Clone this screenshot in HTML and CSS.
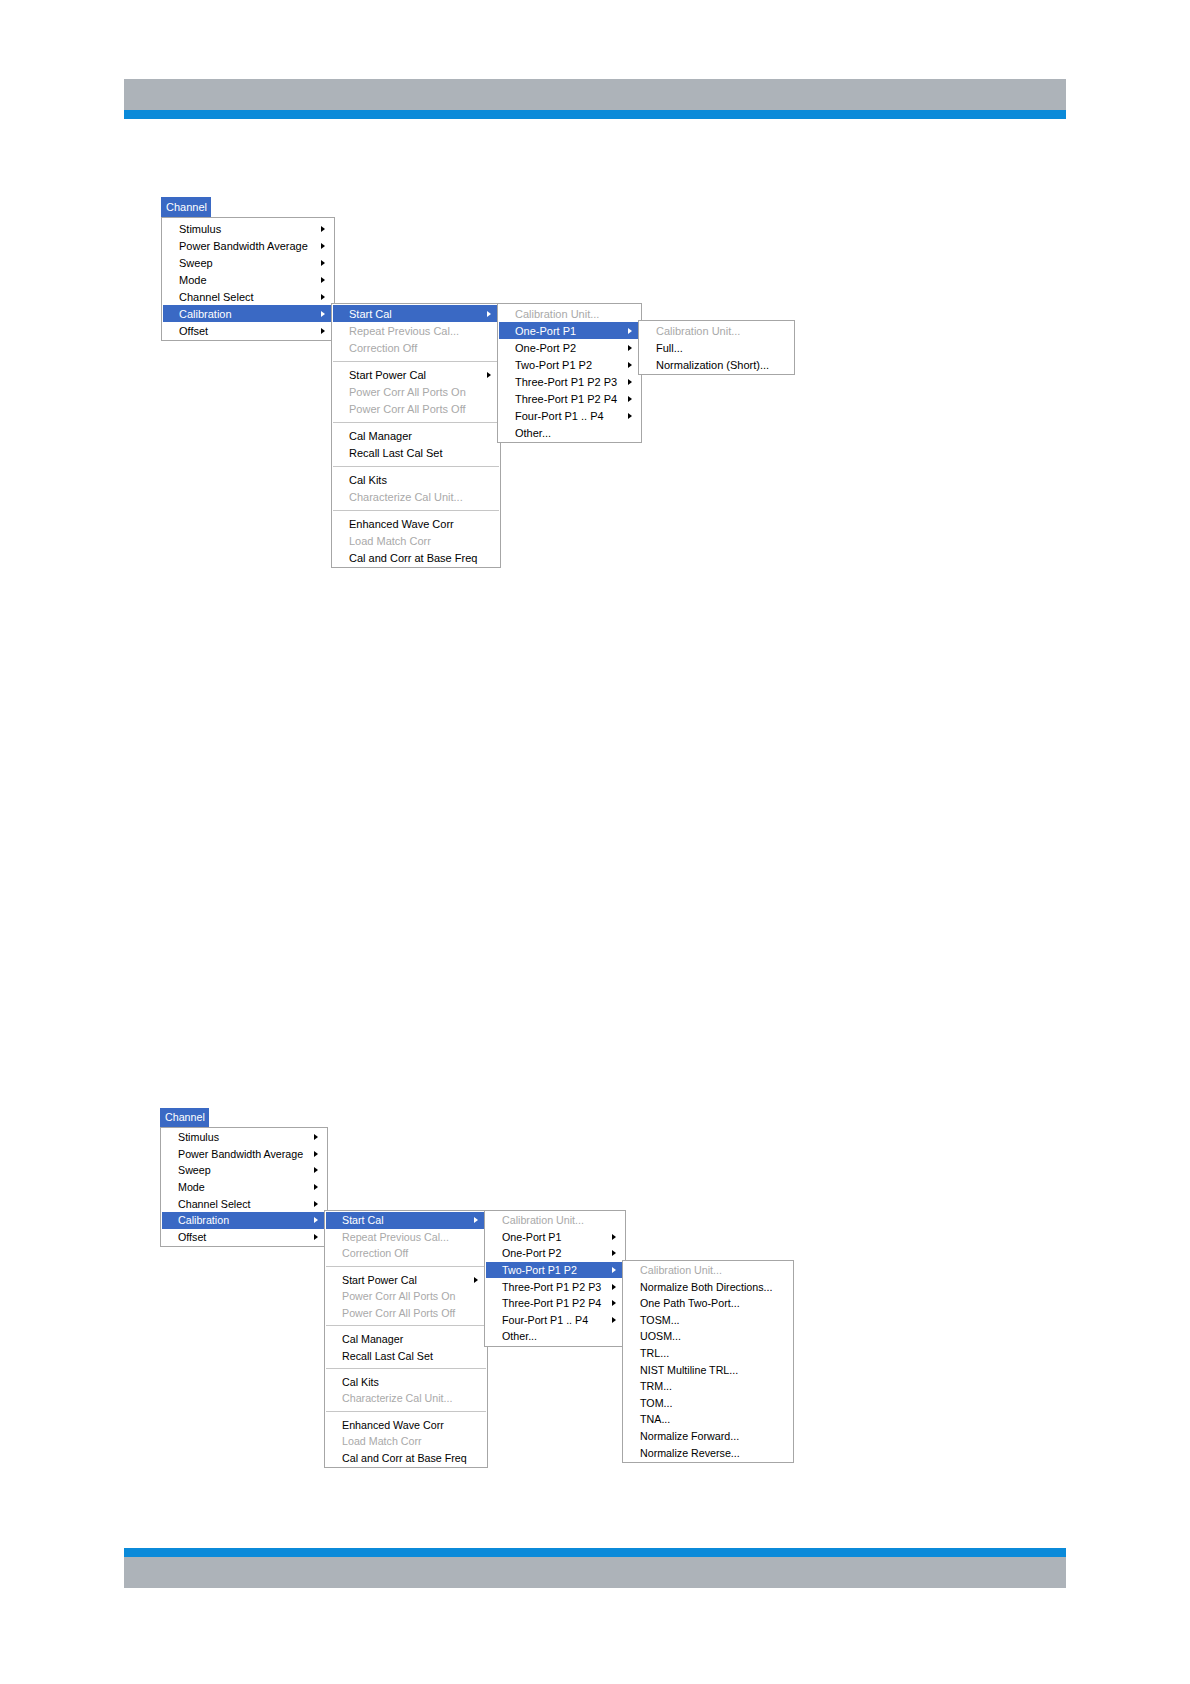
FILE: index.html
```html
<!DOCTYPE html>
<html>
<head>
    <title>Channel - Calibration menu</title>
    <link rel="stylesheet" href="styles.css">
</head>
<body>
    <div class="page">
        <div class="band band-top"></div>

        <!-- Figure 1: Start Cal > One-Port P1 -->
        <div class="figure fig1">
            <div class="tab">Channel</div>
            <div class="menu main">
                <div class="item"><span class="label">Stimulus</span><span class="arrow"></span></div>
                <div class="item"><span class="label">Power Bandwidth Average</span><span class="arrow"></span></div>
                <div class="item"><span class="label">Sweep</span><span class="arrow"></span></div>
                <div class="item"><span class="label">Mode</span><span class="arrow"></span></div>
                <div class="item"><span class="label">Channel Select</span><span class="arrow"></span></div>
                <div class="item on"><span class="label">Calibration</span><span class="arrow"></span>
                    <div class="menu sub sub1">
                        <div class="item on"><span class="label">Start Cal</span><span class="arrow"></span>
                            <div class="menu sub sub2">
                                <div class="item off"><span class="label">Calibration Unit...</span></div>
                                <div class="item on"><span class="label">One-Port P1</span><span class="arrow"></span>
                                    <div class="menu sub sub3">
                                        <div class="item off"><span class="label">Calibration Unit...</span></div>
                                        <div class="item"><span class="label">Full...</span></div>
                                        <div class="item"><span class="label">Normalization (Short)...</span></div>
                                    </div>
                                </div>
                                <div class="item"><span class="label">One-Port P2</span><span class="arrow"></span></div>
                                <div class="item"><span class="label">Two-Port P1 P2</span><span class="arrow"></span></div>
                                <div class="item"><span class="label">Three-Port P1 P2 P3</span><span class="arrow"></span></div>
                                <div class="item"><span class="label">Three-Port P1 P2 P4</span><span class="arrow"></span></div>
                                <div class="item"><span class="label">Four-Port P1 .. P4</span><span class="arrow"></span></div>
                                <div class="item"><span class="label">Other...</span></div>
                            </div>
                        </div>
                        <div class="item off"><span class="label">Repeat Previous Cal...</span></div>
                        <div class="item off"><span class="label">Correction Off</span></div>
                        <div class="sep"></div>
                        <div class="item"><span class="label">Start Power Cal</span><span class="arrow"></span></div>
                        <div class="item off"><span class="label">Power Corr All Ports On</span></div>
                        <div class="item off"><span class="label">Power Corr All Ports Off</span></div>
                        <div class="sep"></div>
                        <div class="item"><span class="label">Cal Manager</span></div>
                        <div class="item"><span class="label">Recall Last Cal Set</span></div>
                        <div class="sep"></div>
                        <div class="item"><span class="label">Cal Kits</span></div>
                        <div class="item off"><span class="label">Characterize Cal Unit...</span></div>
                        <div class="sep"></div>
                        <div class="item"><span class="label">Enhanced Wave Corr</span></div>
                        <div class="item off"><span class="label">Load Match Corr</span></div>
                        <div class="item"><span class="label">Cal and Corr at Base Freq</span></div>
                    </div>
                </div>
                <div class="item"><span class="label">Offset</span><span class="arrow"></span></div>
            </div>
        </div>

        <!-- Figure 2: Start Cal > Two-Port P1 P2 -->
        <div class="figure fig2">
            <div class="tab">Channel</div>
            <div class="menu main">
                <div class="item"><span class="label">Stimulus</span><span class="arrow"></span></div>
                <div class="item"><span class="label">Power Bandwidth Average</span><span class="arrow"></span></div>
                <div class="item"><span class="label">Sweep</span><span class="arrow"></span></div>
                <div class="item"><span class="label">Mode</span><span class="arrow"></span></div>
                <div class="item"><span class="label">Channel Select</span><span class="arrow"></span></div>
                <div class="item on"><span class="label">Calibration</span><span class="arrow"></span>
                    <div class="menu sub sub1">
                        <div class="item on"><span class="label">Start Cal</span><span class="arrow"></span>
                            <div class="menu sub sub2">
                                <div class="item off"><span class="label">Calibration Unit...</span></div>
                                <div class="item"><span class="label">One-Port P1</span><span class="arrow"></span></div>
                                <div class="item"><span class="label">One-Port P2</span><span class="arrow"></span></div>
                                <div class="item on"><span class="label">Two-Port P1 P2</span><span class="arrow"></span>
                                    <div class="menu sub sub3">
                                        <div class="item off"><span class="label">Calibration Unit...</span></div>
                                        <div class="item"><span class="label">Normalize Both Directions...</span></div>
                                        <div class="item"><span class="label">One Path Two-Port...</span></div>
                                        <div class="item"><span class="label">TOSM...</span></div>
                                        <div class="item"><span class="label">UOSM...</span></div>
                                        <div class="item"><span class="label">TRL...</span></div>
                                        <div class="item"><span class="label">NIST Multiline TRL...</span></div>
                                        <div class="item"><span class="label">TRM...</span></div>
                                        <div class="item"><span class="label">TOM...</span></div>
                                        <div class="item"><span class="label">TNA...</span></div>
                                        <div class="item"><span class="label">Normalize Forward...</span></div>
                                        <div class="item"><span class="label">Normalize Reverse...</span></div>
                                    </div>
                                </div>
                                <div class="item"><span class="label">Three-Port P1 P2 P3</span><span class="arrow"></span></div>
                                <div class="item"><span class="label">Three-Port P1 P2 P4</span><span class="arrow"></span></div>
                                <div class="item"><span class="label">Four-Port P1 .. P4</span><span class="arrow"></span></div>
                                <div class="item"><span class="label">Other...</span></div>
                            </div>
                        </div>
                        <div class="item off"><span class="label">Repeat Previous Cal...</span></div>
                        <div class="item off"><span class="label">Correction Off</span></div>
                        <div class="sep"></div>
                        <div class="item"><span class="label">Start Power Cal</span><span class="arrow"></span></div>
                        <div class="item off"><span class="label">Power Corr All Ports On</span></div>
                        <div class="item off"><span class="label">Power Corr All Ports Off</span></div>
                        <div class="sep"></div>
                        <div class="item"><span class="label">Cal Manager</span></div>
                        <div class="item"><span class="label">Recall Last Cal Set</span></div>
                        <div class="sep"></div>
                        <div class="item"><span class="label">Cal Kits</span></div>
                        <div class="item off"><span class="label">Characterize Cal Unit...</span></div>
                        <div class="sep"></div>
                        <div class="item"><span class="label">Enhanced Wave Corr</span></div>
                        <div class="item off"><span class="label">Load Match Corr</span></div>
                        <div class="item"><span class="label">Cal and Corr at Base Freq</span></div>
                    </div>
                </div>
                <div class="item"><span class="label">Offset</span><span class="arrow"></span></div>
            </div>
        </div>

        <div class="band band-bottom"></div>
    </div>
</body>
</html>
```

FILE: styles.css
```css
body {
    margin: 0;
    background: #ffffff;
    font-family: "Liberation Sans", Arial, sans-serif;
}

.page {
    width: 942px;
    margin-left: 124px;
    padding-top: 79px;
}

.band {
    height: 31px;
    background-color: #adb3b9;
}

.band-top {
    border-bottom: 9px solid #0b8ad9;
}

.band-bottom {
    border-top: 9px solid #0b8ad9;
}

/* each screenshot of the cascading menu */
.figure {
    --row: 17px;
    --sep: 10px;
    font-size: 11px;
    height: 380px;
}

.fig1 {
    margin: 78px 0 0 37px;
}

.fig2 {
    --row: 16.6px;
    --sep: 9.6px;
    font-size: 10.7px;
    margin: 531px 0 60px 36px;
}

.tab {
    display: inline-block;
    height: 20px;
    line-height: 20px;
    padding: 0 4px 0 5px;
    background-color: #3a69c4;
    color: #ffffff;
    vertical-align: top;
}

.fig2 .tab {
    height: 19px;
    line-height: 19px;
}

.menu {
    background: #ffffff;
    border: 1px solid #a6a6a6;
    padding: 1px;
    color: #000000;
}

.main {
    padding-top: 2px;
}

.fig1 .main { width: 170px; }
.fig2 .main { width: 164px; padding-top: 1px; }

.sub {
    position: absolute;
    left: calc(100% - 2px);
    top: -2px;
    z-index: 1;
}

.fig1 .sub1 { width: 166px; }
.fig1 .sub2 { width: 141px; }
.fig1 .sub3 { width: 153px; }

.fig2 .sub1 { width: 160px; }
.fig2 .sub2 { width: 138px; }
.fig2 .sub3 { width: 168px; }

.item {
    position: relative;
    display: flex;
    align-items: center;
    height: var(--row);
    padding: 0 8px 0 16px;
    white-space: nowrap;
}

.label {
    flex: 1;
}

.arrow {
    width: 0;
    height: 0;
    border-left: 4px solid #000000;
    border-top: 3.5px solid transparent;
    border-bottom: 3.5px solid transparent;
}

.item.on {
    background-color: #3a69c4;
    color: #ffffff;
}

.item.on > .arrow {
    border-left-color: #ffffff;
}

.item.on .sub {
    color: #000000;
}

.item.off {
    color: #a9a9a9;
}

.sep {
    height: var(--sep);
    display: flex;
    align-items: center;
}

.sep::after {
    content: "";
    flex: 1;
    height: 1px;
    background-color: #c6c6c6;
}
```
